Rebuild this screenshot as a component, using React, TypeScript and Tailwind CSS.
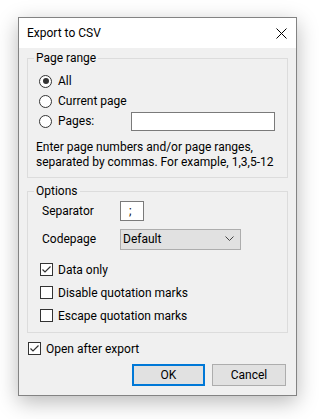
import { useState } from "react";

const Radio = ({ checked }: { checked?: boolean }) => (
    <span className="w-[13px] h-[13px] rounded-full border border-[#333] bg-white flex items-center justify-center shrink-0">
        {checked && <span className="w-[6px] h-[6px] rounded-full bg-[#333]" />}
    </span>
);

const Checkbox = ({ checked }: { checked?: boolean }) => (
    <span className="w-[13px] h-[13px] border border-[#333] bg-white flex items-center justify-center shrink-0">
        {checked && (
            <svg width="11" height="11" viewBox="0 0 11 11">
                <path d="M1.5 5.5 L4 8 L9.5 2.5" fill="none" stroke="#333" strokeWidth="1.2" />
            </svg>
        )}
    </span>
);

const GroupBox = ({ title, children, className }: { title: string; children: React.ReactNode; className?: string }) => (
    <div className={"relative border border-[#dcdcdc] " + (className ?? "")}>
        <span className="absolute -top-[9px] left-[6px] px-[2px] bg-[#f0f0f0] leading-[16px]">{title}</span>
        {children}
    </div>
);

const App = () => {
    const [range] = useState("all");
    return (
        <div className="w-[319px] h-[419px] bg-white pt-[17px] pl-[18px] text-[12px] text-black font-['Roboto',sans-serif]">
            <div className="w-[279px] h-[379px] border border-[#838383] flex flex-col shadow-[0_6px_20px_rgba(0,0,0,0.28)]">
                {/* title bar */}
                <div className="h-[30px] bg-white flex items-center justify-between pl-[8px] pr-[9px]">
                    <span className="text-[12px]">Export to CSV</span>
                    <svg width="11" height="11" viewBox="0 0 11 11">
                        <path d="M0.5 0.5 L10.5 10.5 M10.5 0.5 L0.5 10.5" stroke="#000" strokeWidth="1" />
                    </svg>
                </div>

                <div className="flex-1 bg-[#f0f0f0] px-[8px] pt-[10px] flex flex-col">
                    <GroupBox title="Page range" className="pt-[12px] pb-[7px]">
                        <div className="pl-[11px]">
                            <div className="h-[20px] flex items-center gap-[6px]">
                                <Radio checked={range === "all"} />
                                <span>All</span>
                            </div>
                            <div className="h-[20px] flex items-center gap-[6px]">
                                <Radio />
                                <span>Current page</span>
                            </div>
                            <div className="h-[20px] flex items-center">
                                <Radio />
                                <span className="ml-[6px] w-[73px]">Pages:</span>
                                <div className="w-[144px] h-[19px] bg-white border border-[#7a7a7a]" />
                            </div>
                        </div>
                        <p className="pl-[8px] mt-[9px] leading-[15px]">
                            Enter page numbers and/or page ranges,
                            <br />
                            separated by commas. For example, 1,3,5-12
                        </p>
                    </GroupBox>

                    <GroupBox title="Options" className="mt-[13px] pt-[9px] pb-[5px]">
                        <div className="h-[20px] flex items-center pl-[14px]">
                            <span className="w-[78px]">Separator</span>
                            <div className="w-[24px] h-[20px] bg-white border border-[#7a7a7a] flex items-center pl-[8px]">;</div>
                        </div>
                        <div className="h-[20px] mt-[8px] flex items-center pl-[14px]">
                            <span className="w-[78px]">Codepage</span>
                            <div className="w-[121px] h-[21px] bg-[#e1e1e1] border border-[#adadad] flex items-center justify-between pl-[2px] pr-[6px]">
                                <span>Default</span>
                                <svg width="9" height="6" viewBox="0 0 9 6">
                                    <path d="M0.5 0.5 L4.5 4.5 L8.5 0.5" fill="none" stroke="#444" strokeWidth="1" />
                                </svg>
                            </div>
                        </div>
                        <div className="mt-[9px] pl-[12px]">
                            <div className="h-[23px] flex items-center gap-[5px]">
                                <Checkbox checked />
                                <span>Data only</span>
                            </div>
                            <div className="h-[23px] flex items-center gap-[5px]">
                                <Checkbox />
                                <span>Disable quotation marks</span>
                            </div>
                            <div className="h-[23px] flex items-center gap-[5px]">
                                <Checkbox />
                                <span>Escape quotation marks</span>
                            </div>
                        </div>
                    </GroupBox>

                    <div className="mt-[4px] h-[23px] flex items-center gap-[5px] pl-[1px]">
                        <Checkbox checked />
                        <span>Open after export</span>
                    </div>

                    <div className="mt-[4px] flex justify-end gap-[7px] pr-[2px]">
                        <button className="w-[73px] h-[22px] bg-[#e1e1e1] border-2 border-[#0078d7]">OK</button>
                        <button className="w-[74px] h-[22px] bg-[#e1e1e1] border border-[#adadad]">Cancel</button>
                    </div>
                </div>
            </div>
        </div>
    );
};

export default App;
